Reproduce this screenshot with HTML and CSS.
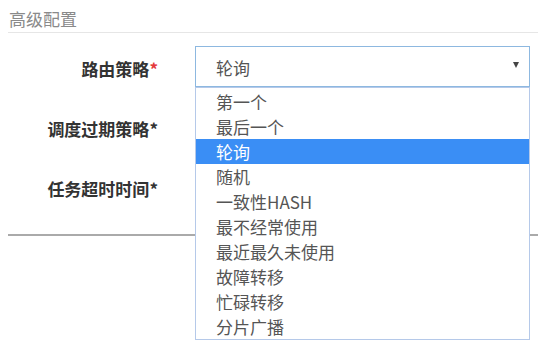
FILE: index.html
```html
<!DOCTYPE html>
<html>
	<head>
		<meta charset="utf-8">
		<title>高级配置</title>
		<link rel="stylesheet" href="styles.css">
	</head>
	<body>
		<!--advanced config-->
		<div class="panel">
			<h4 class="legend">高级配置</h4>
			<div class="form">
				<div class="row">
					<label class="label">路由策略<span class="req">*</span></label>
					<div class="field">
						<div class="select">
							<span>轮询</span>
							<span class="caret"></span>
						</div>
						<!--open dropdown-->
						<ul class="menu">
							<li>第一个</li>
							<li>最后一个</li>
							<li class="active">轮询</li>
							<li>随机</li>
							<li>一致性HASH</li>
							<li>最不经常使用</li>
							<li>最近最久未使用</li>
							<li>故障转移</li>
							<li>忙碌转移</li>
							<li>分片广播</li>
						</ul>
					</div>
				</div>
				<div class="row">
					<label class="label">调度过期策略<span class="star">*</span></label>
					<div class="field"></div>
				</div>
				<div class="row">
					<label class="label">任务超时时间<span class="star">*</span></label>
					<div class="field"></div>
				</div>
			</div>
			<div class="divider"></div>
		</div>
		<!--/advanced config-->
	</body>
</html>
```

FILE: styles.css
```css
html, body{
	height:100%;
}
body{
	margin:0;
	font-family:"Noto Sans CJK SC", sans-serif;
	font-size:17px;
	background:#fff;
}
.panel{
	min-height:341px;
}
.legend{
	margin:0 0 0 8px;
	padding:9px 0 3px 1px;
	line-height:20px;
	font-size:17px;
	font-weight:normal;
	color:#8a8a8a;
	border-bottom:1px solid #e6e6e6;
}
.form{
	margin-top:13px;
}
.row{
	display:flex;
	align-items:center;
	height:41px;
	margin-bottom:19px;
}
.label{
	width:158px;
	margin-right:37px;
	padding-top:3px;
	text-align:right;
	font-weight:bold;
	color:#333;
}
.req{
	color:#e4393c;
}
.star{
	color:#333;
}
.field{
	position:relative;
	width:335px;
	height:41px;
}
.select{
	box-sizing:border-box;
	height:41px;
	display:flex;
	align-items:center;
	justify-content:space-between;
	padding:3px 10px 0 20px;
	border:1px solid #8db8e0;
	color:#555;
	line-height:20px;
}
.caret{
	width:0;
	height:0;
	margin-top:-6px;
	border-left:3px solid transparent;
	border-right:3px solid transparent;
	border-top:6px solid #444;
}
.menu{
	position:absolute;
	top:100%;
	left:0;
	right:0;
	z-index:10;
	margin:0;
	padding:1px 0 0;
	list-style:none;
	background:#fff;
	border:1px solid #b5c9e9;
}
.menu li{
	height:25px;
	line-height:25px;
	padding-left:20px;
	color:#555;
}
.menu li.active{
	background:#3a8ef5;
	color:#fff;
}
.divider{
	margin:27px 0 0 8px;
	border-top:2px solid #aaa;
}
```
